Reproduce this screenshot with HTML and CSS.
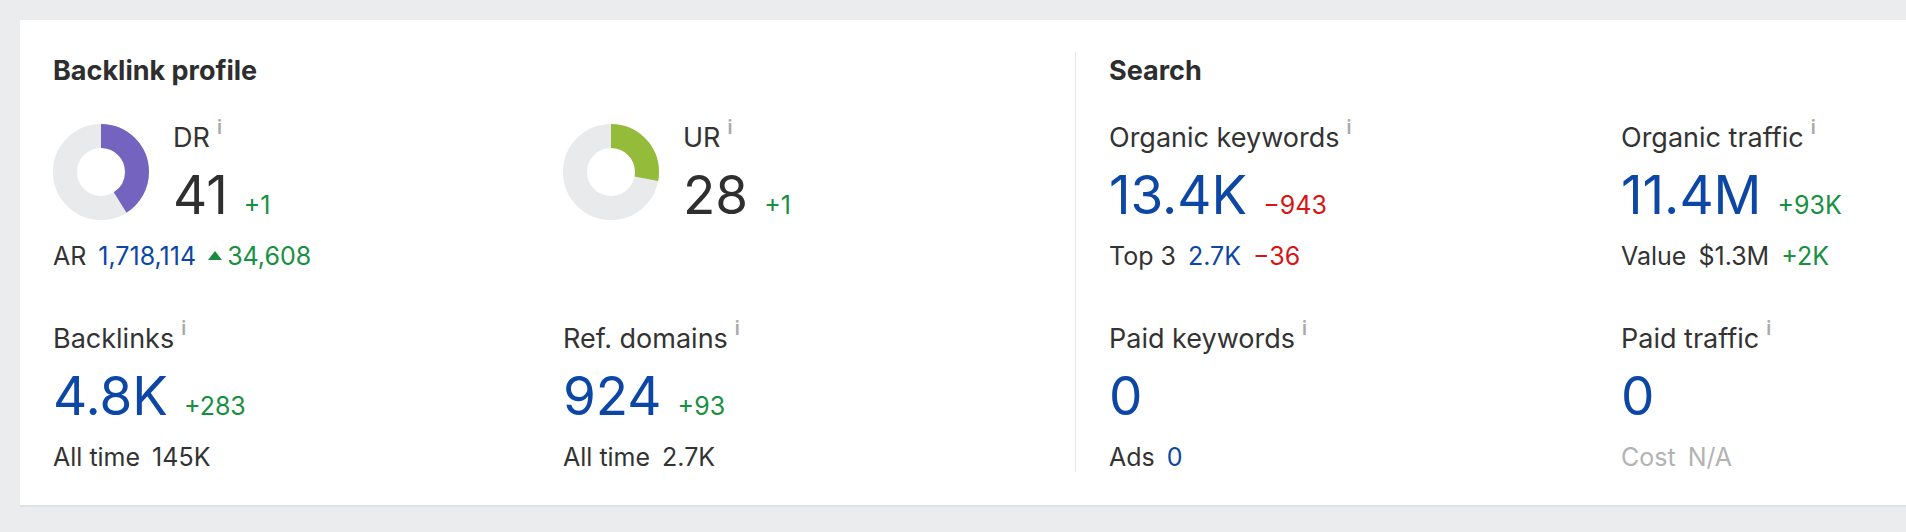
FILE: index.html
```html
<!DOCTYPE html>
<html>
<head>
<meta charset="utf-8">
<link rel="stylesheet" href="styles.css">
</head>
<body>
<div class="page">
  <div class="card">
    <section class="panel backlinks">
      <h2 class="title">Backlink profile</h2>
      <div class="grid">
        <div class="metric">
          <div class="rating">
            <svg class="donut" width="96" height="96" viewBox="0 0 96 96">
              <circle cx="48" cy="48" r="36" fill="none" stroke="#e9eaec" stroke-width="24"/>
              <circle cx="48" cy="48" r="36" fill="none" stroke="#7463bf" stroke-width="24" stroke-dasharray="92.74 226.19" transform="rotate(-90 48 48)"/>
            </svg>
            <div class="rating-text">
              <div class="label">DR<span class="info">i</span></div>
              <div class="value dark">41<span class="delta green">+1</span></div>
            </div>
          </div>
          <div class="sub">AR<span class="blue gap">1,718,114</span><span class="tri"></span><span class="green">34,608</span></div>
        </div>
        <div class="metric">
          <div class="rating">
            <svg class="donut" width="96" height="96" viewBox="0 0 96 96">
              <circle cx="48" cy="48" r="36" fill="none" stroke="#e9eaec" stroke-width="24"/>
              <circle cx="48" cy="48" r="36" fill="none" stroke="#94bb3a" stroke-width="24" stroke-dasharray="63.33 226.19" transform="rotate(-90 48 48)"/>
            </svg>
            <div class="rating-text">
              <div class="label">UR<span class="info">i</span></div>
              <div class="value dark">28<span class="delta green">+1</span></div>
            </div>
          </div>
        </div>
        <div class="metric">
          <div class="label">Backlinks<span class="info">i</span></div>
          <div class="value blue">4.8K<span class="delta green">+283</span></div>
          <div class="sub">All time<span class="gap">145K</span></div>
        </div>
        <div class="metric">
          <div class="label">Ref. domains<span class="info">i</span></div>
          <div class="value blue">924<span class="delta green">+93</span></div>
          <div class="sub">All time<span class="gap">2.7K</span></div>
        </div>
      </div>
    </section>
    <section class="panel search">
      <h2 class="title">Search</h2>
      <div class="grid">
        <div class="metric">
          <div class="label">Organic keywords<span class="info">i</span></div>
          <div class="value blue">13.4K<span class="delta red">−943</span></div>
          <div class="sub">Top 3<span class="blue gap">2.7K</span><span class="red gap">−36</span></div>
        </div>
        <div class="metric">
          <div class="label">Organic traffic<span class="info">i</span></div>
          <div class="value blue">11.4M<span class="delta green">+93K</span></div>
          <div class="sub">Value<span class="gap">$1.3M</span><span class="green gap">+2K</span></div>
        </div>
        <div class="metric">
          <div class="label">Paid keywords<span class="info">i</span></div>
          <div class="value blue">0</div>
          <div class="sub">Ads<span class="blue gap">0</span></div>
        </div>
        <div class="metric">
          <div class="label">Paid traffic<span class="info">i</span></div>
          <div class="value blue">0</div>
          <div class="sub muted">Cost<span class="gap">N/A</span></div>
        </div>
      </div>
    </section>
  </div>
</div>
</body>
</html>
```

FILE: styles.css
```css
html, body {
  margin: 0;
  overflow: hidden;
}
body {
  background: #ebecee;
  font-family: Inter, "Noto Sans", sans-serif;
  color: #303030;
  width: 1906px;
  height: 532px;
}
.page {
  padding: 20px 0 0 20px;
}
.card {
  background: #fff;
  display: flex;
  width: max-content;
  padding: 32px 0 33px 33px;
  border-bottom: 2px solid #dfe0e3;
}
.backlinks {
  width: 1022px;
}
.search {
  border-left: 1px solid #e4e5e8;
  padding-left: 33px;
}
.title {
  margin: 3px 0 0;
  font-size: 27px;
  line-height: 32px;
  font-weight: 700;
  color: #2e2e2e;
}
.grid {
  display: grid;
  grid-template-columns: 510px 512px;
  row-gap: 52px;
  margin-top: 35px;
}
.search .grid {
  grid-template-columns: 512px 512px;
}
.rating {
  display: flex;
  align-items: flex-start;
}
.donut {
  display: block;
  flex: none;
  margin-top: 2px;
}
.rating-text {
  margin-left: 24px;
}
.label {
  font-size: 27px;
  line-height: 32px;
  color: #333;
}
.info {
  font-size: 19px;
  font-weight: 600;
  color: #a9a9a9;
  margin-left: 7px;
  vertical-align: 13px;
  line-height: 0;
}
.value {
  font-size: 53px;
  line-height: 60px;
  margin-top: 11px;
  font-weight: 400;
}
.value.dark {
  color: #2f2f2f;
}
.delta {
  font-size: 25px;
  line-height: 1;
  margin-left: 16px;
}
.sub {
  font-size: 25px;
  line-height: 30px;
  margin-top: 16px;
  color: #333;
}
.gap {
  margin-left: 12px;
}
.tri {
  display: inline-block;
  width: 0;
  height: 0;
  border-left: 7.5px solid transparent;
  border-right: 7.5px solid transparent;
  border-bottom: 9px solid #1a8b3e;
  margin: 0 5px 5px 12px;
}
.blue { color: #0c47a5; }
.green { color: #17903f; }
.red { color: #d71515; }
.muted { color: #b3b3b3; }
```
